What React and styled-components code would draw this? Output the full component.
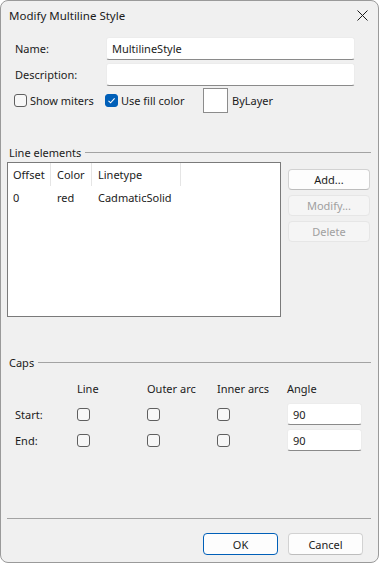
import React from 'react'
import styled, { createGlobalStyle } from 'styled-components'

const font = `'Noto Sans', 'Open Sans', sans-serif`

const GlobalStyle = createGlobalStyle`
  html, body {
    margin: 0;
    padding: 0;
    background: #ffffff;
  }
  body {
    font-family: ${font};
    font-size: 11px;
    color: #1b1b1b;
  }
  * {
    box-sizing: border-box;
  }
`

const Window = styled.div`
  width: 379px;
  height: 563px;
  display: flex;
  flex-direction: column;
  background: #f0f0f0;
  border: 1px solid #9a9a9a;
  border-radius: 8px;
  overflow: hidden;
`

const TitleBar = styled.div`
  height: 29px;
  flex-shrink: 0;
  display: flex;
  align-items: center;
  justify-content: space-between;
  padding: 0 10px 0 8px;
  font-size: 11.5px;
`

const CloseIcon = () => (
  <svg width="11" height="11" viewBox="0 0 11 11">
    <path d="M0.5 0.5 L10.5 10.5 M10.5 0.5 L0.5 10.5" stroke="#1b1b1b" strokeWidth="1" fill="none" />
  </svg>
)

const Content = styled.div`
  flex: 1;
  display: flex;
  flex-direction: column;
  padding: 7px 7px 0 6px;
`

const FormGrid = styled.div`
  display: grid;
  grid-template-columns: 91px 1fr;
  grid-auto-rows: 23px;
  row-gap: 3px;
  padding: 0 16px 0 8px;
  align-items: center;
`

const TextInput = styled.div`
  height: ${p => p.$h || 23}px;
  display: flex;
  align-items: center;
  background: #ffffff;
  border: 1px solid #ececec;
  border-bottom-color: #8a8a8a;
  border-radius: 3px;
  padding: 0 5px;
  white-space: nowrap;
`

const OptionsRow = styled.div`
  display: flex;
  align-items: center;
  height: 25px;
  margin-top: 2px;
  padding-left: 7px;
`

const CheckLabel = styled.label`
  display: flex;
  align-items: center;
  gap: 3px;
  width: ${p => p.$w ? `${p.$w}px` : 'auto'};
`

const Box = styled.span`
  width: 13px;
  height: 13px;
  flex-shrink: 0;
  display: inline-flex;
  align-items: center;
  justify-content: center;
  border-radius: 3px;
  border: 1px solid ${p => p.$checked ? '#005fb8' : '#5f5f5f'};
  background: ${p => p.$checked ? '#005fb8' : '#f7f7f7'};
`

const Checkbox = ({ checked }) => (
  <Box $checked={checked}>
    {checked &&
      <svg width="9" height="9" viewBox="0 0 9 9">
        <path d="M1.5 4.8 L3.6 6.8 L7.6 2.4" stroke="#ffffff" strokeWidth="1.1" fill="none" />
      </svg>
    }
  </Box>
)

const Swatch = styled.span`
  width: 25px;
  height: 25px;
  background: #ffffff;
  border: 1px solid #8c8c8c;
  margin-right: 4px;
`

const GroupHeader = styled.div`
  display: flex;
  align-items: center;
  gap: 4px;
  height: 16px;
  margin-top: ${p => p.$top}px;
  padding-left: 2px;
`

const GroupLine = styled.div`
  flex: 1;
  height: 1px;
  background: #a3a3a3;
`

const ElementsRow = styled.div`
  display: flex;
  gap: 7px;
  margin-top: 2px;
`

const ListBox = styled.div`
  width: 274px;
  height: 155px;
  background: #ffffff;
  border: 1px solid #7a7a7a;
`

const ListRow = styled.div`
  display: grid;
  grid-template-columns: 43px 41px 89px 1fr;
  height: ${p => p.$h}px;
  align-items: center;
`

const HeadCell = styled.div`
  height: 100%;
  display: flex;
  align-items: center;
  padding-left: ${p => p.$pad || 6}px;
  border-right: ${p => p.$last ? 'none' : '1px solid #e5e5e5'};
`

const Cell = styled.div`
  padding-left: ${p => p.$pad || 6}px;
  white-space: nowrap;
`

const ButtonColumn = styled.div`
  width: 82px;
  display: flex;
  flex-direction: column;
  gap: 5px;
  padding-top: 7px;
`

const Button = styled.button`
  height: ${p => p.$h || 21}px;
  width: ${p => p.$w ? `${p.$w}px` : '100%'};
  font-family: ${font};
  font-size: 11px;
  color: ${p => p.disabled ? '#a0a0a0' : '#1b1b1b'};
  background: ${p => p.disabled ? '#f5f5f5' : '#fdfdfd'};
  border: 1px solid ${p => p.$primary ? '#005fb8' : p.disabled ? '#e6e6e6' : '#d2d2d2'};
  border-bottom-color: ${p => p.$primary ? '#005fb8' : p.disabled ? '#e6e6e6' : '#bdbdbd'};
  border-radius: 4px;
  padding: 0;
`

const CapsGrid = styled.div`
  display: grid;
  grid-template-columns: 62px 70px 70px 70px 75px;
  grid-auto-rows: 22px;
  row-gap: 4px;
  align-items: center;
  margin-top: 7px;
  padding-left: 8px;
`

const Footer = styled.div`
  margin-top: auto;
  display: flex;
  justify-content: flex-end;
  gap: 10px;
  border-top: 1px solid #a3a3a3;
  padding: 14px 8px 7px 0;
`

const columns = ['Offset', 'Color', 'Linetype']
const elements = [{ offset: '0', color: 'red', linetype: 'CadmaticSolid' }]

const App = () => (
  <>
    <GlobalStyle />
    <Window>
      <TitleBar>
        <span>Modify Multiline Style</span>
        <CloseIcon />
      </TitleBar>
      <Content>
        <FormGrid>
          <span>Name:</span>
          <TextInput>MultilineStyle</TextInput>
          <span>Description:</span>
          <TextInput />
        </FormGrid>

        <OptionsRow>
          <CheckLabel $w={91}>
            <Checkbox />
            Show miters
          </CheckLabel>
          <CheckLabel $w={98}>
            <Checkbox checked />
            Use fill color
          </CheckLabel>
          <Swatch />
          <span>ByLayer</span>
        </OptionsRow>

        <GroupHeader $top={31}>
          <span>Line elements</span>
          <GroupLine />
        </GroupHeader>
        <ElementsRow>
          <ListBox>
            <ListRow $h={23}>
              {columns.map((c, i) => (
                <HeadCell key={c} $pad={i === 0 ? 5 : 6}>{c}</HeadCell>
              ))}
              <HeadCell $last />
            </ListRow>
            {elements.map(el => (
              <ListRow key={el.linetype} $h={22}>
                <Cell $pad={5}>{el.offset}</Cell>
                <Cell>{el.color}</Cell>
                <Cell>{el.linetype}</Cell>
              </ListRow>
            ))}
          </ListBox>
          <ButtonColumn>
            <Button>Add...</Button>
            <Button disabled>Modify...</Button>
            <Button disabled>Delete</Button>
          </ButtonColumn>
        </ElementsRow>

        <GroupHeader $top={37}>
          <span>Caps</span>
          <GroupLine />
        </GroupHeader>
        <CapsGrid>
          <span />
          <span>Line</span>
          <span>Outer arc</span>
          <span>Inner arcs</span>
          <span>Angle</span>

          <span>Start:</span>
          <Checkbox />
          <Checkbox />
          <Checkbox />
          <TextInput $h={22}>90</TextInput>

          <span>End:</span>
          <Checkbox />
          <Checkbox />
          <Checkbox />
          <TextInput $h={22}>90</TextInput>
        </CapsGrid>

        <Footer>
          <Button $primary $w={75} $h={22}>OK</Button>
          <Button $w={75} $h={22}>Cancel</Button>
        </Footer>
      </Content>
    </Window>
  </>
)

export default App
